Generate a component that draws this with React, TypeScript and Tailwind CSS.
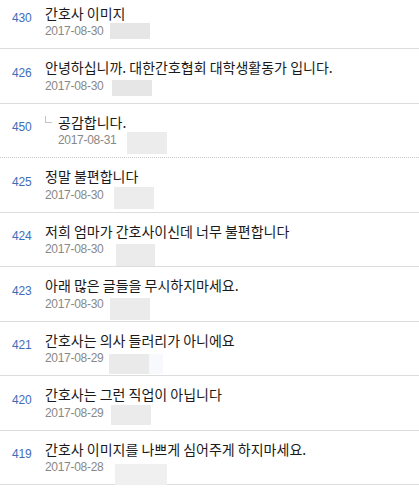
import React from "react";

interface Post {
  id: number;
  title: string;
  date: string;
  reply?: boolean;
  dotted?: boolean;
  box: string;
  extra?: string;
}

const posts: Post[] = [
  { id: 430, title: "간호사 이미지", date: "2017-08-30", box: "ml-[7px] mt-[-1.5px] w-[40px] h-[16px] bg-[#e6e6e6]" },
  { id: 426, title: "안녕하십니까. 대한간호협회 대학생활동가 입니다.", date: "2017-08-30", box: "ml-[9px] mt-[1.5px] w-[40px] h-[16px] bg-[#e6e6e6]" },
  { id: 450, title: "공감합니다.", date: "2017-08-31", reply: true, dotted: true, box: "ml-[11px] mt-[-1.5px] w-[40px] h-[22px] bg-[#ececec]" },
  { id: 425, title: "정말 불편합니다", date: "2017-08-30", box: "ml-[11px] mt-[-0.5px] w-[40px] h-[22px] bg-[#ececec]" },
  { id: 424, title: "저희 엄마가 간호사이신데 너무 불편합니다", date: "2017-08-30", box: "ml-[13px] mt-[1.5px] w-[39px] h-[22px] bg-[#ebebeb]" },
  { id: 423, title: "아래 많은 글들을 무시하지마세요.", date: "2017-08-30", box: "ml-[7px] mt-[1.5px] w-[40px] h-[22px] bg-[#ebebeb]" },
  { id: 421, title: "간호사는 의사 들러리가 아니에요", date: "2017-08-29", box: "ml-[6px] mt-[2.5px] w-[40px] h-[20px] bg-[#ebeaea]", extra: "mt-[2.5px] w-[14px] h-[20px] bg-[#f7f9fc]" },
  { id: 420, title: "간호사는 그런 직업이 아닙니다", date: "2017-08-29", box: "ml-[8px] mt-[-0.5px] w-[40px] h-[20px] bg-[#ebebeb]" },
  { id: 419, title: "간호사 이미지를 나쁘게 심어주게 하지마세요.", date: "2017-08-28", box: "ml-[12px] mt-[3.5px] w-[52px] h-[21px] bg-[#f0f0f0]" },
];

export default function App() {
  return (
    <div className="w-[419px] h-[489px] overflow-hidden bg-white">
      <ul className="mt-[-5.5px]">
        {posts.map((p) => (
          <li
            key={p.id}
            className={
              p.dotted
                ? "flex h-[54.5px] border-b border-dotted border-[#c8c8c8]"
                : "flex h-[54.5px] border-b border-[#dddddd]"
            }
          >
            <div className="w-[45px] shrink-0 pl-[12px] pt-[16.5px] text-[12px] leading-[14px] text-[#3f6db8] font-['Liberation_Sans',sans-serif] tracking-[-0.2px]">
              {p.id}
            </div>
            <div className="flex pt-[9px]">
              {p.reply && (
                <div className="w-[13px] shrink-0 pt-[3px]">
                  <div className="w-[7px] h-[7px] border-l border-b border-[#c4c4c4]" />
                </div>
              )}
              <div>
                <div className="text-[14px] leading-[18px] text-[#1a1a1a] whitespace-nowrap font-['Noto_Sans_CJK_KR',sans-serif]">
                  {p.title}
                </div>
                <div className="flex items-start mt-[2.5px]">
                  <span className="w-[58px] shrink-0 whitespace-nowrap text-[12px] leading-[14px] text-[#888] tracking-[-0.3px] font-['Liberation_Sans',sans-serif]">
                    {p.date}
                  </span>
                  <div className={p.box} />
                  {p.extra && <div className={p.extra} />}
                </div>
              </div>
            </div>
          </li>
        ))}
      </ul>
    </div>
  );
}
